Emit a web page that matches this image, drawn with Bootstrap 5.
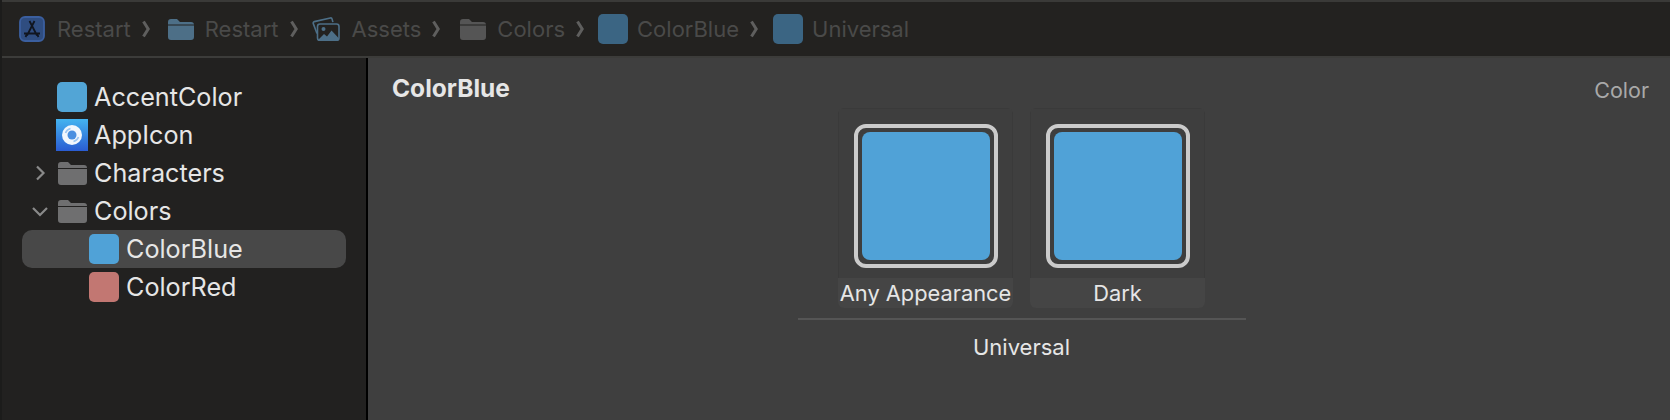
<!DOCTYPE html>
<html lang="en">
<head>
<meta charset="utf-8">
<title>ColorBlue</title>
<link href="https://cdn.jsdelivr.net/npm/bootstrap@5.3.0/dist/css/bootstrap.min.css" rel="stylesheet">
<style>
html,body{height:420px;overflow:hidden;background:#232220;}
body{font-family:Inter,"Liberation Sans",sans-serif;}
.xc-frame{height:420px;padding-left:2px;background:#1c1c1b;}
.xc-top{height:58px;background:#232220;border-top:2px solid #3a3a38;border-bottom:2px solid #3c3c3a;padding-left:17px;font-size:22px;color:#4a4a49;}
.xc-crumb-text{margin-left:11px;}
.xc-crumb-text.far{margin-left:12px;}
.xc-crumb-text.near{margin-left:9px;}
.xc-chev{margin:0 18px 0 11px;flex:none;display:block;}
.xc-chev.after-13{margin-right:13px;}
.xc-chev.after-14{margin-right:14px;}
.xc-chev.after-15{margin-right:15px;}
.xc-chev.after-20{margin-right:20px;}
.xc-ico{display:block;flex:none;}
.xc-dimswatch{width:30px;height:30px;border-radius:5px;background:#3b6583;flex:none;}
.xc-body{height:362px;}
.xc-side{width:366px;flex:none;background:#222120;border-right:2px solid #000;padding-top:20px;color:#e6e6e6;font-size:25.2px;}
.xc-row{height:38px;margin:0 20px;padding-left:35px;border-radius:10px;}
.xc-row.indent{padding-left:67px;}
.xc-row.active{background:#484848;}
.xc-tx{padding-top:2px;}
.xc-slot{width:30px;flex:none;margin-right:7px;display:flex;justify-content:center;}
.xc-swatch{width:30px;height:30px;border-radius:5px;}
.xc-blue{background:#50a2d7;}
.xc-accent{background:#52a5d6;}
.xc-red{background:#c27772;}
.xc-disc{flex:none;margin-left:-25px;margin-right:5px;width:20px;display:block;}
.xc-main{background:#3f3f3f;color:#e6e6e6;padding:15px 21px 0 24px;}
.xc-title{font-size:24.5px;font-weight:700;line-height:30px;}
.xc-kind{font-size:21.5px;color:#a9a9a9;line-height:35px;}
.xc-group{width:448px;margin:0 auto;position:relative;left:1px;}
.xc-cards{gap:17px;}
.xc-card{width:175px;height:200px;border-radius:6px;background:#454545;overflow:hidden;}
.xc-well{height:170px;background:#3e3e3e;border:1px solid #3a3a3a;border-bottom:0;padding-top:15px;}
.xc-frameb{width:144px;height:144px;border:4px solid #cbcbcb;border-radius:12px;padding:4px;}
.xc-fill{width:100%;height:100%;background:#50a2d7;border-radius:8px;}
.xc-label{height:30px;font-size:21.8px;line-height:30px;white-space:nowrap;}
.xc-caption{border-top:2px solid #555;margin-top:10px;padding-top:13px;font-size:22px;line-height:28px;}
</style>
</head>
<body>
<div class="xc-frame d-flex flex-column">
  <div class="xc-top d-flex align-items-center">
    <svg class="xc-ico" width="26" height="26" viewBox="0 0 26 26"><rect x="1" y="1" width="24" height="24" rx="5" fill="#2f4d80" stroke="#3b5f9f" stroke-width="1.8"/><path d="M10.5 5l7.5 14.5M15.5 5L8 19.5M5 17.5h16M6.5 21l1.5-3M19.5 21l-1.5-3" stroke="#10151f" stroke-width="1.8" fill="none"/></svg>
    <span class="xc-crumb-text far">Restart</span>
    <svg class="xc-chev" width="8" height="18" viewBox="0 0 8 18"><path d="M1.5 1.5L6.2 9L1.5 16.5" stroke="#5f5f5e" stroke-width="3" fill="none"/></svg>
    <svg class="xc-ico" width="26" height="22" viewBox="0 0 26 22"><path d="M0 4a3 3 0 0 1 3-3h6l3 3h11a3 3 0 0 1 3 3v12a3 3 0 0 1-3 3H3a3 3 0 0 1-3-3z" fill="#4d6f87"/><path d="M0 7h26" stroke="#232220" stroke-width="1"/></svg>
    <span class="xc-crumb-text">Restart</span>
    <svg class="xc-chev after-13" width="8" height="18" viewBox="0 0 8 18"><path d="M1.5 1.5L6.2 9L1.5 16.5" stroke="#5f5f5e" stroke-width="3" fill="none"/></svg>
    <svg class="xc-ico" width="29" height="24" viewBox="0 0 29 24"><path d="M6 16.5L2.3 6.6a1.5 1.5 0 0 1 1-2l16-3.6a1.5 1.5 0 0 1 1.8 1.1l.8 3" fill="none" stroke="#4d6f87" stroke-width="1.6"/><rect x="6.5" y="7" width="21.5" height="16.5" rx="2.5" fill="#232220" stroke="#4d6f87" stroke-width="1.6"/><circle cx="12.5" cy="12" r="2" fill="#4d6f87"/><path d="M7 23l6-6 3 2.5 4.5-6 7.5 8V23z" fill="#4d6f87"/></svg>
    <span class="xc-crumb-text far">Assets</span>
    <svg class="xc-chev after-20" width="8" height="18" viewBox="0 0 8 18"><path d="M1.5 1.5L6.2 9L1.5 16.5" stroke="#5f5f5e" stroke-width="3" fill="none"/></svg>
    <svg class="xc-ico" width="26" height="22" viewBox="0 0 26 22"><path d="M0 4a3 3 0 0 1 3-3h6l3 3h11a3 3 0 0 1 3 3v12a3 3 0 0 1-3 3H3a3 3 0 0 1-3-3z" fill="#555"/><path d="M0 7h26" stroke="#232220" stroke-width="1"/></svg>
    <span class="xc-crumb-text">Colors</span>
    <svg class="xc-chev after-14" width="8" height="18" viewBox="0 0 8 18"><path d="M1.5 1.5L6.2 9L1.5 16.5" stroke="#5f5f5e" stroke-width="3" fill="none"/></svg>
    <span class="xc-dimswatch"></span>
    <span class="xc-crumb-text near">ColorBlue</span>
    <svg class="xc-chev after-15" width="8" height="18" viewBox="0 0 8 18"><path d="M1.5 1.5L6.2 9L1.5 16.5" stroke="#5f5f5e" stroke-width="3" fill="none"/></svg>
    <span class="xc-dimswatch"></span>
    <span class="xc-crumb-text near">Universal</span>
  </div>
  <div class="xc-body d-flex">
    <ul class="xc-side list-unstyled mb-0">
      <li class="xc-row d-flex align-items-center"><span class="xc-slot"><span class="xc-swatch xc-accent"></span></span><span class="xc-tx">AccentColor</span></li>
      <li class="xc-row d-flex align-items-center"><span class="xc-slot"><svg width="32" height="32" viewBox="0 0 32 32" class="xc-ico"><defs><linearGradient id="xcg" x1="0" y1="0" x2="0" y2="1"><stop offset="0" stop-color="#44b4f0"/><stop offset="1" stop-color="#2a5cd2"/></linearGradient></defs><rect width="32" height="32" fill="url(#xcg)"/><circle cx="16" cy="16" r="10" fill="#f2f7fd"/><circle cx="16" cy="16" r="4.5" fill="#4a8fe0"/><path d="M9.5 14a7 7 0 0 1 5-4.5M22.5 18a7 7 0 0 1-5 4.5" stroke="#9cc6f2" stroke-width="1.6" fill="none"/></svg></span><span class="xc-tx">AppIcon</span></li>
      <li class="xc-row d-flex align-items-center"><svg class="xc-disc" height="18" viewBox="0 0 20 18"><path d="M5 2.5L11.5 9L5 15.5" stroke="#8a8a8a" stroke-width="2.2" fill="none"/></svg><span class="xc-slot"><svg class="xc-ico" width="29" height="24" viewBox="0 0 29 24"><path d="M0 4a3 3 0 0 1 3-3h7l3 3h13a3 3 0 0 1 3 3v14a3 3 0 0 1-3 3H3a3 3 0 0 1-3-3z" fill="#6f6f70"/><path d="M0 7.5h29" stroke="#222120" stroke-width="1"/></svg></span><span class="xc-tx">Characters</span></li>
      <li class="xc-row d-flex align-items-center"><svg class="xc-disc" height="18" viewBox="0 0 20 18"><path d="M1 6l7 7 7-7" stroke="#8a8a8a" stroke-width="2.2" fill="none"/></svg><span class="xc-slot"><svg class="xc-ico" width="29" height="24" viewBox="0 0 29 24"><path d="M0 4a3 3 0 0 1 3-3h7l3 3h13a3 3 0 0 1 3 3v14a3 3 0 0 1-3 3H3a3 3 0 0 1-3-3z" fill="#6f6f70"/><path d="M0 7.5h29" stroke="#222120" stroke-width="1"/></svg></span><span class="xc-tx">Colors</span></li>
      <li class="xc-row indent active d-flex align-items-center"><span class="xc-slot"><span class="xc-swatch xc-blue"></span></span><span class="xc-tx">ColorBlue</span></li>
      <li class="xc-row indent d-flex align-items-center"><span class="xc-slot"><span class="xc-swatch xc-red"></span></span><span class="xc-tx">ColorRed</span></li>
    </ul>
    <main class="xc-main flex-grow-1">
      <div class="d-flex justify-content-between align-items-start">
        <div class="xc-title">ColorBlue</div>
        <div class="xc-kind">Color</div>
      </div>
      <div class="xc-group text-center">
        <div class="xc-cards d-flex justify-content-center">
          <div class="xc-card">
            <div class="xc-well d-flex justify-content-center align-items-start"><div class="xc-frameb"><div class="xc-fill"></div></div></div>
            <div class="xc-label">Any Appearance</div>
          </div>
          <div class="xc-card">
            <div class="xc-well d-flex justify-content-center align-items-start"><div class="xc-frameb"><div class="xc-fill"></div></div></div>
            <div class="xc-label">Dark</div>
          </div>
        </div>
        <div class="xc-caption">Universal</div>
      </div>
    </main>
  </div>
</div>
<script src="https://cdn.jsdelivr.net/npm/bootstrap@5.3.0/dist/js/bootstrap.bundle.min.js"></script>
</body>
</html>
